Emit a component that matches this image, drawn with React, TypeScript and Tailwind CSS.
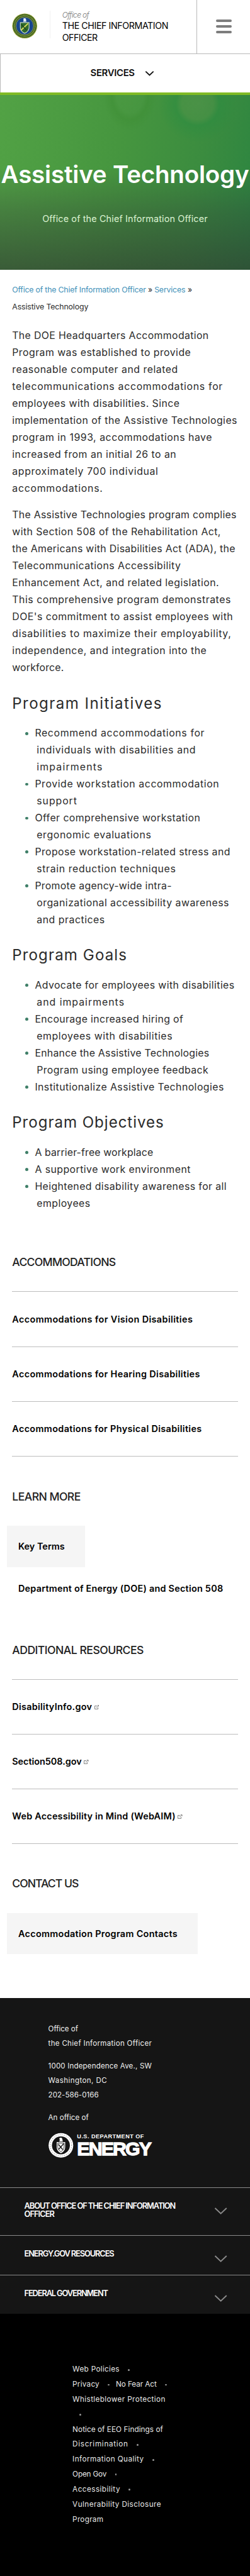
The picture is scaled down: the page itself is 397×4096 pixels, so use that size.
import { useLayoutEffect, useRef, useState } from "react";
import type { ReactNode } from "react";

type FitProps = { children: string; w: number; className?: string };

/** Tracks a single line of text so that it spans a given width. */
function Fit({ children, w, className = "" }: FitProps) {
  const ref = useRef<HTMLSpanElement>(null);
  const [spacing, setSpacing] = useState(0);
  useLayoutEffect(() => {
    const el = ref.current;
    const ctx = document.createElement("canvas").getContext("2d");
    if (!el || !ctx) return;
    const cs = getComputedStyle(el);
    ctx.font = `${cs.fontStyle} ${cs.fontWeight} ${cs.fontSize} ${cs.fontFamily}`;
    const natural = ctx.measureText(children).width;
    setSpacing((w + 1.2 - natural) / Math.max(1, children.length - 1));
  }, [children, w]);
  return (
    <span ref={ref} className={`whitespace-nowrap ${className}`} style={{ letterSpacing: `${spacing}px` }}>
      {children}
    </span>
  );
}

type Line = [string, number];

const intro: Line[] = [
  ["The DOE Headquarters Accommodation", 323],
  ["Program was established to provide", 293.5],
  ["reasonable computer and related", 272],
  ["telecommunications accommodations for", 346],
  ["employees with disabilities. Since", 275],
  ["implementation of the Assistive Technologies", 370],
  ["program in 1993, accommodations have", 328.5],
  ["increased from an initial 26 to an", 269.5],
  ["approximately 700 individual", 239.5],
  ["accommodations.", 148],
];

const compliance: Line[] = [
  ["The Assistive Technologies program complies", 369],
  ["with Section 508 of the Rehabilitation Act,", 343],
  ["the Americans with Disabilities Act (ADA), the", 367],
  ["Telecommunications Accessibility", 277],
  ["Enhancement Act, and related legislation.", 340],
  ["This comprehensive program demonstrates", 359.5],
  ["DOE's commitment to assist employees with", 363],
  ["disabilities to maximize their employability,", 360],
  ["independence, and integration into the", 319.5],
  ["workforce.", 84],
];

const programs: { title: Line; items: Line[][] }[] = [
  {
    title: ["Program Initiatives", 245],
    items: [
      [["Recommend accommodations for", 278.5], ["individuals with disabilities and", 261], ["impairments", 107]],
      [["Provide workstation accommodation", 302.5], ["support", 65]],
      [["Offer comprehensive workstation", 271.5], ["ergonomic evaluations", 187.5]],
      [["Propose workstation-related stress and", 321], ["strain reduction techniques", 228]],
      [["Promote agency-wide intra-", 224.5], ["organizational accessibility awareness", 316], ["and practices", 111]],
    ],
  },
  {
    title: ["Program Goals", 187.5],
    items: [
      [["Advocate for employees with disabilities", 328], ["and impairments", 143]],
      [["Encourage increased hiring of", 243.5], ["employees with disabilities", 222.5]],
      [["Enhance the Assistive Technologies", 286.5], ["Program using employee feedback", 282]],
      [["Institutionalize Assistive Technologies", 310.5]],
    ],
  },
  {
    title: ["Program Objectives", 248.5],
    items: [
      [["A barrier-free workplace", 194]],
      [["A supportive work environment", 255.5]],
      [["Heightened disability awareness for all", 315], ["employees", 87]],
    ],
  },
];

function Paragraph({ lines, className }: { lines: Line[]; className: string }) {
  return (
    <p className={`text-[16.500px] leading-[28px] ${className}`}>
      {lines.map(([t, w]) => (
        <span key={t} className="block">
          <Fit w={w}>{t}</Fit>
        </span>
      ))}
    </p>
  );
}

function SectionTitle({ line, className }: { line: Line; className: string }) {
  return (
    <h3 className={`text-[18.3px] font-medium leading-[24px] text-[#222] ${className}`}>
      <Fit w={line[1]}>{line[0]}</Fit>
    </h3>
  );
}

function ExternalIcon() {
  return (
    <svg viewBox="0 0 8 8" className="ml-[3.500px] mt-[1px] size-[8px]" fill="none" stroke="#7c7c7c" strokeWidth="1">
      <path d="M4 1.6H.6v5.200h5.200V4.200M3 4.600 7.200.8M5 .7h2.400V3" />
    </svg>
  );
}

function RuledList({ rows, external = false, className }: { rows: Line[]; external?: boolean; className: string }) {
  return (
    <ul className={`border-t border-[#bdbdbd] ${className}`}>
      {rows.map(([t, w]) => (
        <li key={t} className="flex h-[90.4px] items-center border-b border-[#bdbdbd] text-[15px] font-semibold text-black">
          <Fit w={w}>{t}</Fit>
          {external && <ExternalIcon />}
        </li>
      ))}
    </ul>
  );
}

function Chevron({ className }: { className: string }) {
  return (
    <svg viewBox="0 0 20 11" className={`overflow-visible ${className}`} fill="none" stroke="currentColor">
      <path d="M.5 1 10 10l9.500-9" />
    </svg>
  );
}

function ColorSeal() {
  return (
    <svg viewBox="0 0 42 42" className="size-[42px]">
      <circle cx="21" cy="21" r="20.5" fill="#8d9a2c" />
      <circle cx="21" cy="21" r="19.3" fill="#2f5a25" />
      <circle cx="21" cy="21" r="17" fill="none" stroke="#a3a83a" strokeWidth="2.2" strokeDasharray="1.2 1" />
      <circle cx="21" cy="21" r="14.6" fill="#17468f" stroke="#b5b04a" strokeWidth="0.8" />
      <path d="M13.8 15.5h14.4v8c0 5-3.4 7.8-7.2 9.6-3.8-1.8-7.2-4.6-7.2-9.6z" fill="#2f6b2b" stroke="#c3d3c6" strokeWidth="1.2" />
      <path d="M15 28 26.500 17" stroke="#d9dc5c" strokeWidth="2" />
      <path d="M15.500 18.500 24 28" stroke="#1d3f1e" strokeWidth="1.300" />
      <path d="M18.500 9.500c1-1.700 4-1.700 4.600.2l.6 4.300h-5.200l.8-3z" fill="#e9f1f6" />
    </svg>
  );
}

function MonoSeal() {
  return (
    <svg viewBox="0 0 42 42" className="size-[42px]">
      <circle cx="20.500" cy="21" r="20.300" fill="#fff" />
      <circle cx="20.500" cy="21" r="17.600" fill="none" stroke="#999" strokeWidth="1.200" strokeDasharray="1.200 2.300" />
      <circle cx="20.500" cy="21" r="14.800" fill="#151515" />
      <path d="M13.500 15.500h14v8c0 5.500-3.300 8.500-7 10.500-3.700-2-7-5-7-10.500z" fill="#fff" />
      <path d="M15.300 17.300h10.400v6c0 4.200-2.400 6.600-5.200 8.300-2.800-1.700-5.200-4.100-5.200-8.300z" fill="none" stroke="#151515" strokeWidth="0.900" />
      <path d="M16.500 19.500l7 8.500M24.800 18.500l-7.800 9" stroke="#151515" strokeWidth="1.500" />
      <path d="M17.500 10.500c1.200-3 5-3 5.300.2l.8 4h-5.800l1-3z" fill="#fff" />
    </svg>
  );
}

function AccordionRow({ lines, className }: { lines: Line[]; className: string }) {
  return (
    <div className={`flex items-start justify-between border-t border-[#8a8a8a] pl-[40px] pr-[38px] pt-[22.500px] ${className}`}>
      <div className="text-[13.300px] font-semibold leading-[14px] text-white">
        {lines.map(([t, w]) => (
          <div key={t}>
            <Fit w={w}>{t}</Fit>
          </div>
        ))}
      </div>
      <Chevron className="mt-[9.500px] h-[11px] w-[20px] stroke-2 text-[#8a8a8a]" />
    </div>
  );
}

function Dot() {
  return <i className="ml-[14px] inline-block size-[3px] rounded-full bg-[#999]" />;
}

function LinkRow({ children }: { children?: ReactNode }) {
  return <div className="flex h-[24.750px] items-center">{children}</div>;
}

export default function App() {
  return (
    <div className="w-full overflow-hidden bg-white font-['Inter','Liberation_Sans',sans-serif] text-[#2b2b2b] [zoom:0.9633]">
      <header>
        <div className="flex h-[89px] border-b border-[#b9b9b9]">
          <div className="flex w-[325px] items-start border-r border-[#b9b9b9] pl-[20px]">
            <div className="mt-[21.500px]">
              <ColorSeal />
            </div>
            <div className="ml-[19.500px] mt-[18px] h-[45px] w-px bg-[#f1f1f1]" />
            <div className="ml-[20px] pt-[16.500px]">
              <div className="text-[12.500px] font-light italic leading-[17px] text-[#777]">
                <Fit w={43.5}>Office of</Fit>
              </div>
              <div className="text-[14.800px] leading-[19px] text-black">
                <Fit w={174} className="block">THE CHIEF INFORMATION</Fit>
                <Fit w={57.5} className="block">OFFICER</Fit>
              </div>
            </div>
          </div>
          <div className="ml-[31px] flex flex-col gap-[5.700px] pt-[32px]">
            <span className="h-[4px] w-[26px] rounded-full bg-[#7d7d7d]" />
            <span className="h-[4px] w-[26px] rounded-full bg-[#7d7d7d]" />
            <span className="h-[4px] w-[26px] rounded-full bg-[#7d7d7d]" />
          </div>
        </div>
        <nav className="flex h-[64px] items-center border-l border-[#b9b9b9] pb-[1.600px] pl-[148px]">
          <span className="text-[15.500px] font-semibold text-[#111]">
            <Fit w={72}>SERVICES</Fit>
          </span>
          <Chevron className="ml-[18px] mt-[2px] h-[7.500px] w-[13.500px] stroke-[2.800] text-[#111]" />
        </nav>
        <div className="h-[4px] bg-[#80bb25]" />
      </header>

      <section className="flex h-[288px] flex-col items-center bg-[radial-gradient(circle_at_79%_5%,rgba(90,150,80,0.45)_0px,rgba(90,150,80,0.3)_26px,rgba(40,140,65,0.45)_36px,rgba(40,140,65,0)_64px),radial-gradient(ellipse_at_52%_0%,rgba(80,155,70,0.3)_0px,rgba(80,155,70,0.2)_22px,rgba(60,140,50,0.4)_30px,rgba(60,140,50,0)_44px),linear-gradient(to_bottom,rgba(50,60,54,0)_42%,rgba(50,60,54,0.32)_66%,rgba(48,60,50,0.68)_100%),linear-gradient(102deg,#52a245_0%,#46963f_45%,#3b8c3f_75%,#2b8441_100%)] pt-[106.400px] text-white">
        <h1 className="text-[40px] font-semibold leading-[48px]">
          <Fit w={408}>Assistive Technology</Fit>
        </h1>
        <p className="mt-[37px] text-[15px] leading-[24px] text-[#dcf3d2]">
          <Fit w={271.5}>Office of the Chief Information Officer</Fit>
        </p>
      </section>

      <main className="px-[20px]">
        <div className="mt-[19.800px] text-[12.800px] leading-[28px]">
          <div className="flex">
            <Fit w={219.5} className="w-[224px] text-[#3f90b8]">Office of the Chief Information Officer</Fit>
            <span className="w-[10.500px]">»</span>
            <Fit w={50} className="w-[55px] text-[#3f90b8]">Services</Fit>
            <span>»</span>
          </div>
          <Fit w={124.5} className="block">Assistive Technology</Fit>
        </div>
        <Paragraph lines={intro} className="mt-[20.400px]" />
        <Paragraph lines={compliance} className="mt-[16px]" />

        {programs.map((p) => (
          <section key={p.title[0]}>
            <h2 className="mt-[28.800px] text-[25px] font-normal leading-[32px] text-[#2b2b2b]">
              <Fit w={p.title[1]}>{p.title[0]}</Fit>
            </h2>
            <ul className="mt-[19.200px] pl-[22px] text-[16.500px] leading-[28px]">
              {p.items.map((item) => (
                <li key={item[0][0]} className="flex">
                  <span className="mt-[11px] size-[5px] rounded-full bg-[#3f7f68]" />
                  <div className="ml-[13.500px]">
                    {item.map(([t, w]) => (
                      <div key={t} className="first:-ml-[3px]">
                        <Fit w={w}>{t}</Fit>
                      </div>
                    ))}
                  </div>
                </li>
              ))}
            </ul>
          </section>
        ))}

        <SectionTitle line={["ACCOMMODATIONS", 170]} className="mt-[70.600px]" />
        <RuledList
          className="mt-[36.200px]"
          rows={[
            ["Accommodations for Vision Disabilities", 296.5],
            ["Accommodations for Hearing Disabilities", 308.5],
            ["Accommodations for Physical Disabilities", 311.5],
          ]}
        />

        <SectionTitle line={["LEARN MORE", 112]} className="mt-[54.700px]" />
        <div className="-ml-[9px] mt-[36.100px] text-[15px] font-semibold text-black">
          <div className="flex h-[68.400px] w-[129px] items-center bg-[#f5f5f5] pl-[19px]">
            <Fit w={75.5}>Key Terms</Fit>
          </div>
          <div className="flex h-[69px] items-center pl-[19px]">
            <Fit w={336.5}>Department of Energy (DOE) and Section 508</Fit>
          </div>
        </div>

        <SectionTitle line={["ADDITIONAL RESOURCES", 216]} className="mt-[55.200px]" />
        <RuledList
          external
          className="mt-[36.400px]"
          rows={[
            ["DisabilityInfo.gov", 130.5],
            ["Section508.gov", 113.5],
            ["Web Accessibility in Mind (WebAIM)", 268],
          ]}
        />

        <SectionTitle line={["CONTACT US", 109]} className="mt-[53.100px]" />
        <div className="-ml-[9px] mt-[37.100px] flex h-[67.600px] w-[315px] items-center bg-[#f5f5f5] pl-[19px] text-[15px] font-semibold text-black">
          <Fit w={261.5}>Accommodation Program Contacts</Fit>
        </div>
      </main>

      <footer className="mt-[72px]">
        <div className="bg-[#151515]">
          <div className="h-[313px] pl-[79.500px] pt-[39.600px] text-[12px] leading-[24px] text-[#efefef]">
            <Fit w={48} className="block">Office of</Fit>
            <Fit w={169.5} className="block">the Chief Information Officer</Fit>
            <div className="mt-[13px]">
              <Fit w={169.5} className="block">1000 Independence Ave., SW</Fit>
              <Fit w={95.5} className="block">Washington, DC</Fit>
              <Fit w={82} className="block">202-586-0166</Fit>
            </div>
            <Fit w={65.5} className="mt-[13.300px] block">An office of</Fit>
            <div className="mt-[13px] flex h-[42px] font-['Liberation_Sans',Arial,sans-serif] font-bold text-white">
              <MonoSeal />
              <div className="ml-[5.500px] pt-[1px]">
                <Fit w={109} className="block text-[9.500px] leading-[11px]">U.S. DEPARTMENT OF</Fit>
                <Fit w={122} className="block text-[31.500px] leading-[29px] [-webkit-text-stroke:1.300px_white]">ENERGY</Fit>
              </div>
            </div>
          </div>
          <AccordionRow
            className="h-[79px]"
            lines={[
              ["ABOUT OFFICE OF THE CHIEF INFORMATION", 249],
              ["OFFICER", 49],
            ]}
          />
          <AccordionRow className="h-[65px]" lines={[["ENERGY.GOV RESOURCES", 147.5]]} />
          <AccordionRow className="h-[64.700px]" lines={[["FEDERAL GOVERNMENT", 137.5]]} />
        </div>
        <div className="h-[432.600px] bg-black pl-[119.500px] pt-[80px] text-[12.200px] text-[#e8e8e8]">
          <LinkRow><Fit w={76}>Web Policies</Fit><Dot /></LinkRow>
          <LinkRow>
            <Fit w={43}>Privacy</Fit><Dot />
            <span className="w-[10px]" />
            <Fit w={66}>No Fear Act</Fit><Dot />
          </LinkRow>
          <LinkRow><Fit w={151.5}>Whistleblower Protection</Fit></LinkRow>
          <LinkRow><span className="-ml-[3px]" /><Dot /></LinkRow>
          <LinkRow><Fit w={148}>Notice of EEO Findings of</Fit></LinkRow>
          <LinkRow><Fit w={90}>Discrimination</Fit><Dot /></LinkRow>
          <LinkRow><Fit w={116}>Information Quality</Fit><Dot /></LinkRow>
          <LinkRow><Fit w={55}>Open Gov</Fit><Dot /></LinkRow>
          <LinkRow><Fit w={77}>Accessibility</Fit><Dot /></LinkRow>
          <LinkRow><Fit w={144.5}>Vulnerability Disclosure</Fit></LinkRow>
          <LinkRow><Fit w={49.5}>Program</Fit></LinkRow>
        </div>
      </footer>
    </div>
  );
}
